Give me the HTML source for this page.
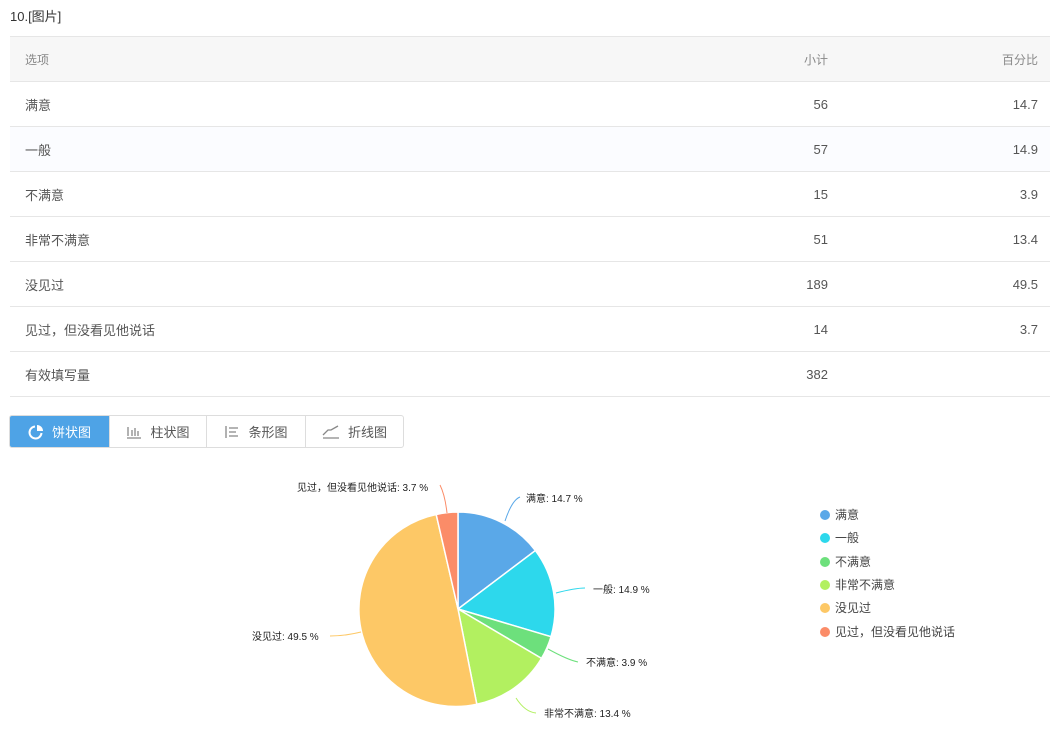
<!DOCTYPE html>
<html><head><meta charset="utf-8"><style>
body{margin:0;background:#fff;font-family:"Liberation Sans","Noto Sans CJK SC",sans-serif;color:#555;width:1050px;height:755px;overflow:hidden;position:relative}
.t{position:absolute;left:10px;top:6px;font-size:13px;color:#333}
table{position:absolute;left:10px;top:36px;width:1040px;border-collapse:collapse;font-size:13px}
td{height:44px;border-top:1px solid #e6e6e6;border-bottom:1px solid #e6e6e6;padding:0}
td.a{padding-left:15px}
td.b{text-align:right;width:300px;padding-right:10px}
td.c{text-align:right;width:200px;padding-right:12px}
tr.h td{background:#f7f7f7;color:#888;font-size:12px}
tr.z td{background:#fbfcff}
.tabs{position:absolute;left:9px;top:415px;height:31px;display:flex;border:1px solid #ddd;border-radius:3px;font-size:13px;color:#555}
.tabs div{display:flex;align-items:center;justify-content:center;border-left:1px solid #ddd;gap:8px}
.tabs div:first-child{border-left:none;background:#4ea3e6;color:#fff;border-radius:2px 0 0 2px}
.lg{position:absolute;left:820px;font-size:12px;color:#444;line-height:14px}
.lg i{display:inline-block;width:10px;height:10px;border-radius:50%;margin-right:5px;vertical-align:-1px}
</style></head><body>
<div class="t">10.[图片]</div>
<table>
<tr class="h"><td class="a">选项</td><td class="b">小计</td><td class="c">百分比</td></tr>
<tr><td class="a">满意</td><td class="b">56</td><td class="c">14.7</td></tr>
<tr class="z"><td class="a">一般</td><td class="b">57</td><td class="c">14.9</td></tr>
<tr><td class="a">不满意</td><td class="b">15</td><td class="c">3.9</td></tr>
<tr><td class="a">非常不满意</td><td class="b">51</td><td class="c">13.4</td></tr>
<tr><td class="a">没见过</td><td class="b">189</td><td class="c">49.5</td></tr>
<tr><td class="a">见过，但没看见他说话</td><td class="b">14</td><td class="c">3.7</td></tr>
<tr><td class="a">有效填写量</td><td class="b">382</td><td class="c"></td></tr>
</table>
<div class="tabs">
<div style="width:99px"><svg width="16" height="16" viewBox="0 0 16 16"><path d="M7 2.5A6 6 0 1 0 13.5 9" fill="none" stroke="#fff" stroke-width="2"/><path d="M9 1v6h6A6 6 0 0 0 9 1z" fill="#fff"/></svg>饼状图</div>
<div style="width:96px"><svg width="16" height="14" viewBox="0 0 16 14"><path d="M2 2v9M6 5v6M9 3v8M12 6v5M1 13h14" stroke="#888" stroke-width="1.3"/></svg>柱状图</div>
<div style="width:98px"><svg width="16" height="14" viewBox="0 0 16 14"><path d="M2 1v12M5 3h9M5 7h7M5 11h9" stroke="#888" stroke-width="1.3"/></svg>条形图</div>
<div style="width:97px"><svg width="18" height="14" viewBox="0 0 18 14"><path d="M1 10l5-5h3l7-4M1 13h16" stroke="#888" stroke-width="1.3" fill="none"/></svg>折线图</div>
</div>
<svg style="position:absolute;left:0;top:0" width="1050" height="755">
<g stroke="#fff" stroke-width="1.5">
<path d="M458 609L458 512A97 97 0 0 1 535.4 550.5Z" fill="#5aa8e8"/>
<path d="M458 609L535.4 550.5A97 97 0 0 1 551 636.7Z" fill="#2dd8ec"/>
<path d="M458 609L551 636.7A97 97 0 0 1 541.5 658.4Z" fill="#6de07c"/>
<path d="M458 609L541.5 658.4A97 97 0 0 1 476.8 704.2Z" fill="#b2f060"/>
<path d="M458 609L476.8 704.2A97 97 0 1 1 436.2 514.5Z" fill="#fdc866"/>
<path d="M458 609L436.2 514.5A97 97 0 0 1 458 512Z" fill="#fb8c68"/>
</g>
<g fill="none" stroke-width="1">
<path d="M505 521Q512 500 520 497" stroke="#5aa8e8"/>
<path d="M556 593Q575 588 585 588" stroke="#2dd8ec"/>
<path d="M548 649Q568 660 578 662" stroke="#6de07c"/>
<path d="M516 698Q525 712 536 713" stroke="#b2f060"/>
<path d="M361 632Q345 636 330 636" stroke="#fdc866"/>
<path d="M447 513Q445 495 440 485" stroke="#fb8c68"/>
</g>
<g font-size="10" fill="#222" font-family="Liberation Sans,Noto Sans CJK SC,sans-serif">
<text x="526" y="502">满意: 14.7 %</text>
<text x="593" y="593">一般: 14.9 %</text>
<text x="586" y="666">不满意: 3.9 %</text>
<text x="544" y="717">非常不满意: 13.4 %</text>
<text x="252" y="640">没见过: 49.5 %</text>
<text x="297" y="491">见过，但没看见他说话: 3.7 %</text>
</g>
</svg>
<div class="lg" style="top:508px"><i style="background:#5aa8e8"></i>满意</div>
<div class="lg" style="top:531px"><i style="background:#2dd8ec"></i>一般</div>
<div class="lg" style="top:555px"><i style="background:#6de07c"></i>不满意</div>
<div class="lg" style="top:578px"><i style="background:#b2f060"></i>非常不满意</div>
<div class="lg" style="top:601px"><i style="background:#fdc866"></i>没见过</div>
<div class="lg" style="top:625px"><i style="background:#fb8c68"></i>见过，但没看见他说话</div>
</body></html>
